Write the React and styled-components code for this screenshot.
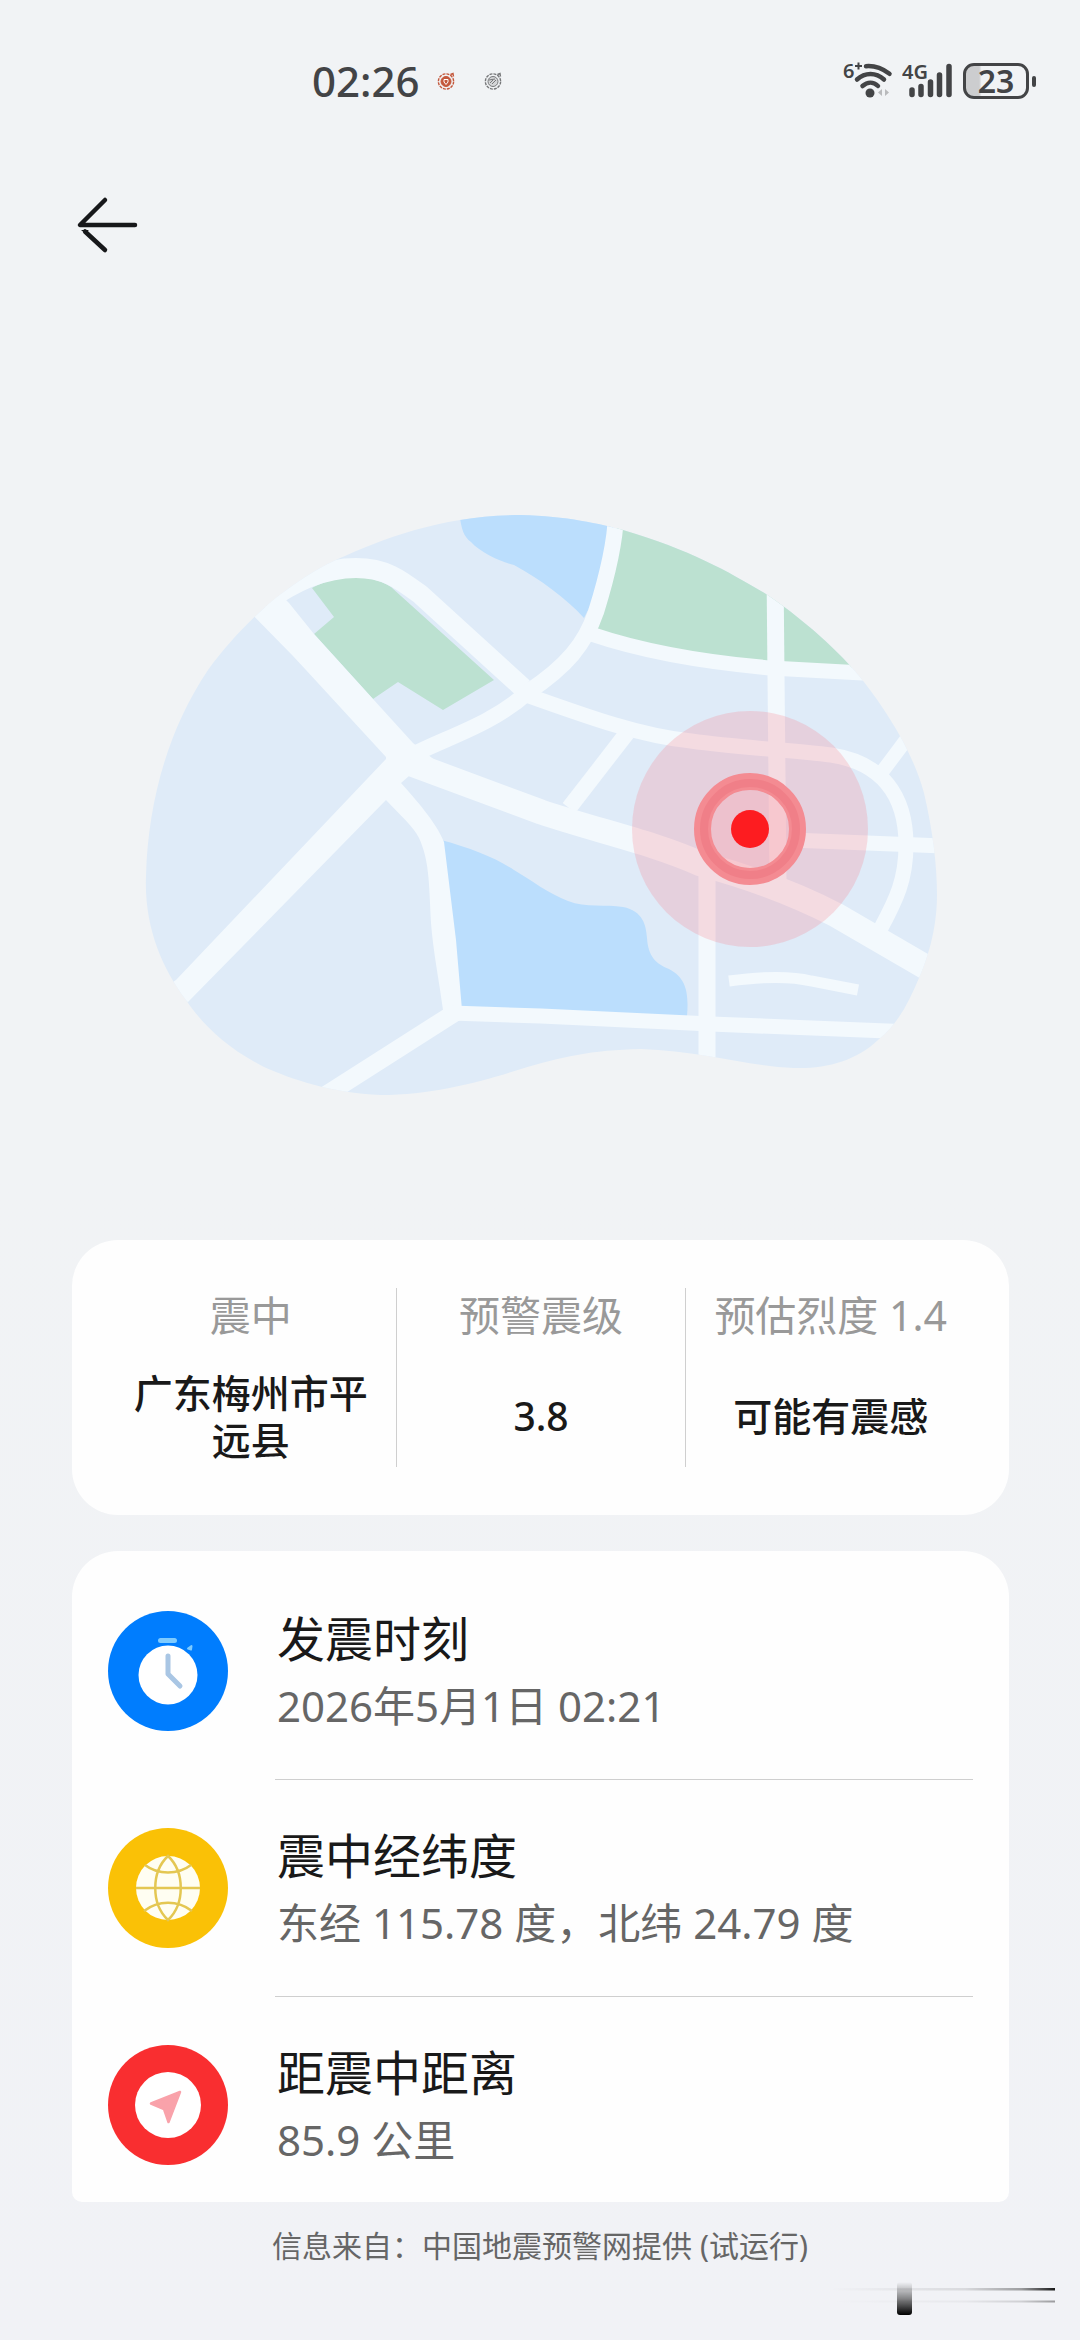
import React from "react";
import styled, { createGlobalStyle } from "styled-components";

const GlobalStyle = createGlobalStyle`
  * { box-sizing: border-box; }
  body {
    margin: 0;
    background: #f1f3f5;
    color: #191919;
    font-family: "Noto Sans", "Noto Sans CJK SC", sans-serif;
  }
  h2, p, dl, dt, dd, ul { margin: 0; padding: 0; }
`;

const Page = styled.div`
  display: flex;
  flex-direction: column;
  min-height: 100vh;
  background: linear-gradient(#f1f3f5, #f1f3f5 50%, #f1f2f6);
`;

const StatusBar = styled.header`
  display: flex;
  align-items: center;
  justify-content: space-between;
  height: 162px;
  padding: 0 44px 0 312px;
  color: #434446;
`;

const StatusGroup = styled.div`
  display: flex;
  align-items: center;
  gap: ${(p) => p.$gap}px;
`;

const Clock = styled.time`
  font-size: 42px;
  font-weight: 500;
  line-height: 48px;
`;

const Battery = styled.div`
  display: flex;
  align-items: center;
  gap: 3px;
  &::after {
    content: "";
    width: 4px;
    height: 11px;
    border-radius: 2px;
    background: #434446;
  }
`;

const BatteryBody = styled.div`
  width: 66px;
  height: 36px;
  border: 3px solid #434446;
  border-radius: 11px;
  background: linear-gradient(90deg, #cccdcf 0 22%, #f1f3f5 26%);
  font-size: 32px;
  font-weight: 600;
  line-height: 30px;
  text-align: center;
`;

const NavBar = styled.nav`
  display: flex;
  align-items: center;
  height: 126px;
  padding: 0 72px;
`;

const BackButton = styled.button`
  display: flex;
  padding: 0;
  border: 0;
  background: none;
`;

const Main = styled.main`
  display: flex;
  flex-direction: column;
  padding: 0 71px 0 72px;
`;

const MapArea = styled.section`
  display: flex;
  justify-content: center;
  padding: 212px 0 120px;
  svg { width: 100%; max-width: 820px; height: auto; }
`;

const Card = styled.section`
  background: #fefefe;
  border-radius: ${(p) => p.$radius};
  padding: ${(p) => p.$padding};
  & + & { margin-top: 36px; }
`;

const Stats = styled.dl`
  display: grid;
  grid-template-columns: repeat(3, 1fr);
`;

const Stat = styled.div`
  display: flex;
  flex-direction: column;
  height: 179px;
  padding: 0 24px;
  text-align: center;
  & + & { border-left: 1px solid #cfcfcf; }
`;

const StatLabel = styled.dt`
  margin: 0 -12px;
  font-size: 41px;
  line-height: 54px;
  white-space: nowrap;
  color: #999;
`;

const StatValue = styled.dd`
  display: flex;
  flex: 1;
  align-items: center;
  justify-content: center;
  padding-top: 22px;
  font-size: 39px;
  font-weight: 500;
  line-height: 47px;
`;

const Rows = styled.ul`
  list-style: none;
`;

const Row = styled.li`
  display: flex;
  gap: 47px;
`;

const RowIcon = styled.svg`
  flex: none;
  width: 120px;
  height: 120px;
  margin-top: 48px;
`;

const RowBody = styled.div`
  flex: 1;
  height: 217px;
  padding: 44px 2px 0;
  border-bottom: 1px solid #cfcfcf;
  ${Row}:last-child & {
    height: 205px;
    border-bottom: 0;
  }
`;

const RowTitle = styled.h2`
  font-size: 48px;
  font-weight: 400;
  line-height: 64px;
`;

const RowText = styled.p`
  font-size: 42px;
  line-height: 70px;
  color: #666;
`;

const Footer = styled.footer`
  padding-top: 22px;
  font-size: 30px;
  line-height: 44px;
  text-align: center;
  color: #666;
`;

const Smudge = styled.svg`
  align-self: flex-end;
  width: 240px;
  height: 40px;
  margin: 12px 24px 0 0;
`;

const AlertBadge = ({ color, filled }) => (
  <svg width="20" height="20" viewBox="0 0 20 20" fill="none" stroke={color}>
    <circle cx="10" cy="10.500" r="7.600" strokeWidth="1.400" strokeDasharray="3 1" />
    <circle cx="10" cy="10.500" r="5" strokeWidth="1" fill={filled ? color : "#d4d5d7"} />
    <path d="M14.500 3.500l2.500-1 .5 3" strokeWidth="1.400" />
    {filled ? (
      <path d="M8 8.500h4v2.500l-2 2.500-2-2.500z" stroke="#fff" strokeWidth="1" />
    ) : (
      <path d="M6 9l6-1M7 12l3-3M9 13l4-4" strokeWidth="1" />
    )}
  </svg>
);

const Wifi = () => (
  <svg width="50" height="60" viewBox="842 51 50 60" fill="none" stroke="#434446">
    <text x="842" y="78" fontSize="20" fontWeight="600" fill="#434446" stroke="none">6</text>
    <path d="M854 66h7M857.500 62.500v7" strokeWidth="2" />
    <path d="M865 66.200c9-.8 16 2 23.500 7.600" strokeWidth="4.500" strokeLinecap="round" />
    <path d="M856 79.500c8-7.500 19-7.500 27 0" strokeWidth="4.500" strokeLinecap="round" />
    <path d="M861.500 86c5-4.500 11-4.500 15.500 0" strokeWidth="4.500" strokeLinecap="round" />
    <circle cx="869" cy="93" r="4.500" fill="#434446" stroke="none" />
    <path d="M881 89l-4 3.500 4 3.500zM884 89l4 3.500-4 3.500z" fill="#b9babc" stroke="none" />
  </svg>
);

const Signal = () => (
  <svg width="52" height="60" viewBox="901 51 52 60" stroke="#434446" strokeWidth="5.500" strokeLinecap="round">
    <text x="901" y="79" fontSize="20" fontWeight="600" fill="#434446" stroke="none">4G</text>
    <path d="M911 90v4.500M920 86.500v8M929.500 82v12.500M938.500 75v19.500M948 66.500v28" />
  </svg>
);

const ArrowBack = () => (
  <svg width="72" height="64" viewBox="72 193 72 64" fill="none" stroke="#17181a" strokeWidth="4.500" strokeLinecap="round">
    <path d="M105 200L80 225h55" strokeLinejoin="round" />
    <path d="M85 231.500l20 18.500" />
    <path d="M82 230.500h6" strokeWidth="1" />
  </svg>
);

const EpicenterMap = () => (
  <svg viewBox="130 500 820 620" role="img" aria-label="震中">
    <defs>
      <clipPath id="land">
        <path d="M145 876C147 800 168 728 207 670C240 625 285 583 337 559C385 537 445 515 520 515C565 516 600 524 622 530C690 550 728 572 765 594C812 626 846 660 863 682C885 710 912 752 923 793C932 832 936 865 936 895C936 930 926 960 918 978C908 1002 897 1024 877 1040C855 1061 825 1069 793 1068C745 1066 700 1051 640 1049C590 1050 560 1057 520 1069C480 1082 430 1095 380 1095C330 1093 290 1079 263 1067C222 1046 200 1022 185 1000C160 967 143 925 145 876Z" />
      </clipPath>
    </defs>
    <g clipPath="url(#land)">
      <path fill="#dfebf8" d="M130 500h820v620H130z" />
      <path fill="#bbdefd" d="M458 510C460 528 462 536 470 542C480 553 500 562 513 565C540 580 565 598 583 618L612 560V505z" />
      <path fill="#bbdefd" d="M440 840C470 848 495 858 513 870C530 880 548 894 567 901C585 908 605 904 622 907C642 911 645 925 646 938C647 956 655 964 668 969C685 978 688 992 686 1016L455 1010z" />
      <path fill="#bce1d1" d="M311 588C330 577 365 571 390 587L493 680L442 710L397 682L372 699L313 634L333 617z" />
      <path fill="#bce1d1" d="M618 520H870V668L782 666C720 664 650 650 592 628z" />
      <path
        fill="#f3f9fd"
        d="M245 608L292 656L305 670L385 757L385 759L175 980L160 990L187 1002L385 800C400 816 412 826 418 838C428 860 428 880 430 923C432 950 438 980 442 1010H461L455 940L443 842C435 822 415 800 400 783L408 776L440 765L412 743L372 699L313 634L288 603L270 585z"
      />
      <g fill="none" stroke="#f3f9fd">
        <path strokeWidth="20" d="M262 604C290 583 322 568 355 568C385 568 400 580 420 595L522 688" />
        <path strokeWidth="16" d="M408 757C440 739 490 726 527 692C566 666 584 644 595 612C605 580 614 545 615 515" />
        <path strokeWidth="15" d="M590 634C640 651 700 662 770 668L880 674" />
        <path strokeWidth="17" d="M774 570L777 885" />
        <path strokeWidth="15" d="M520 693C590 718 640 736 690 741C740 748 790 750 830 755C882 763 905 796 905 845C905 880 895 900 880 928" />
        <path strokeWidth="14" d="M881 772L905 740" />
        <path strokeWidth="15" d="M790 840L945 846" />
        <path strokeWidth="25" d="M408 763L540 812C600 832 650 842 700 864C760 880 800 897 835 915L940 976" />
        <path strokeWidth="16" d="M626 733L568 808" />
        <path strokeWidth="15" d="M450 1013L540 1016L710 1024L910 1032" />
        <path strokeWidth="18" d="M455 1012L320 1098" />
        <path strokeWidth="17" d="M706 870V1080" />
        <path strokeWidth="11" d="M728 981C765 976 790 976 810 981L857 990" />
      </g>
    </g>
    <circle cx="749" cy="829" r="118" fill="#f97886" fillOpacity="0.230" />
    <circle cx="749" cy="829" r="39" fill="#fba6ae" fillOpacity="0.350" />
    <circle cx="749" cy="829" r="47.500" fill="none" stroke="#f48b92" strokeWidth="17" />
    <circle cx="749" cy="829" r="46" fill="none" stroke="#f07f88" strokeWidth="8" />
    <circle cx="749" cy="829" r="19" fill="#fd1c20" />
  </svg>
);

const TimerIcon = () => (
  <RowIcon viewBox="0 0 120 120" aria-hidden="true">
    <circle cx="60" cy="60" r="60" fill="#007dfe" />
    <rect x="50" y="27" width="19" height="5" rx="2.500" fill="#7ecbff" />
    <path d="M80 37.500l3.500-2.500-.5 3.500z" stroke="#7ecbff" strokeWidth="2" strokeLinejoin="round" fill="#7ecbff" />
    <circle cx="60" cy="64" r="29.500" fill="#fff" />
    <path d="M60 45v18l12 12" fill="none" stroke="#a9c6e4" strokeWidth="5" strokeLinecap="round" strokeLinejoin="round" />
  </RowIcon>
);

const GlobeIcon = () => (
  <RowIcon viewBox="0 0 120 120" aria-hidden="true">
    <circle cx="60" cy="60" r="60" fill="#fac106" />
    <circle cx="60" cy="60" r="32" fill="#fffef2" />
    <g fill="none" stroke="#e4c752" strokeWidth="2.500">
      <path d="M28 60h64M60 28C43 44 43 76 60 92C77 76 77 44 60 28zM37 37C50 47 70 47 83 37M36 83C50 72 70 72 84 83" />
    </g>
  </RowIcon>
);

const DistanceIcon = () => (
  <RowIcon viewBox="0 0 120 120" aria-hidden="true">
    <circle cx="60" cy="60" r="60" fill="#f92e30" />
    <circle cx="60" cy="60" r="33" fill="#fff" />
    <path d="M72 47L43 58.500L56 64L60.500 77z" fill="#f9a2aa" stroke="#f9a2aa" strokeWidth="2.500" strokeLinejoin="round" />
  </RowIcon>
);

const stats = [
  { label: "震中", value: "广东梅州市平远县" },
  { label: "预警震级", value: "3.8" },
  { label: "预估烈度 1.4", value: "可能有震感" },
];

const details = [
  { Icon: TimerIcon, title: "发震时刻", text: "2026年5月1日 02:21" },
  { Icon: GlobeIcon, title: "震中经纬度", text: "东经 115.78 度，北纬 24.79 度" },
  { Icon: DistanceIcon, title: "距震中距离", text: "85.9 公里" },
];

export default function App() {
  return (
    <Page>
      <GlobalStyle />
      <StatusBar>
        <StatusGroup $gap={16}>
          <Clock>02:26</Clock>
          <StatusGroup $gap={27}>
            <AlertBadge color="#c4583c" filled />
            <AlertBadge color="#77787a" />
          </StatusGroup>
        </StatusGroup>
        <StatusGroup $gap={9}>
          <Wifi />
          <Signal />
          <Battery>
            <BatteryBody>23</BatteryBody>
          </Battery>
        </StatusGroup>
      </StatusBar>
      <NavBar>
        <BackButton type="button" aria-label="返回">
          <ArrowBack />
        </BackButton>
      </NavBar>
      <Main>
        <MapArea>
          <EpicenterMap />
        </MapArea>
        <Card $radius="46px" $padding="48px 34px">
          <Stats>
            {stats.map((s) => (
              <Stat key={s.label}>
                <StatLabel>{s.label}</StatLabel>
                <StatValue>{s.value}</StatValue>
              </Stat>
            ))}
          </Stats>
        </Card>
        <Card $radius="46px 46px 10px 10px" $padding="12px 36px 0">
          <Rows>
            {details.map(({ Icon, title, text }) => (
              <Row key={title}>
                <Icon />
                <RowBody>
                  <RowTitle>{title}</RowTitle>
                  <RowText>{text}</RowText>
                </RowBody>
              </Row>
            ))}
          </Rows>
        </Card>
      </Main>
      <Footer>信息来自：中国地震预警网提供 (试运行)</Footer>
      <Smudge viewBox="816 2282 240 40" aria-hidden="true">
        <defs>
          <linearGradient id="bar" x1="0" y1="0" x2="0" y2="1">
            <stop offset="0" stopColor="#000" stopOpacity="0" />
            <stop offset="0.500" stopColor="#000" stopOpacity="0.450" />
            <stop offset="1" stopColor="#000" />
          </linearGradient>
          <linearGradient id="line" x1="0" y1="0" x2="1" y2="0">
            <stop offset="0" stopColor="#000" stopOpacity="0" />
            <stop offset="0.600" stopColor="#000" stopOpacity="0.100" />
            <stop offset="0.850" stopColor="#000" stopOpacity="0.350" />
            <stop offset="1" stopColor="#000" stopOpacity="0.900" />
          </linearGradient>
        </defs>
        <rect x="830" y="2290" width="225" height="2.500" fill="url(#line)" />
        <rect x="830" y="2302.500" width="225" height="2" fill="url(#line)" opacity="0.400" />
        <rect x="897" y="2284" width="15" height="33" rx="3" fill="url(#bar)" />
      </Smudge>
    </Page>
  );
}
